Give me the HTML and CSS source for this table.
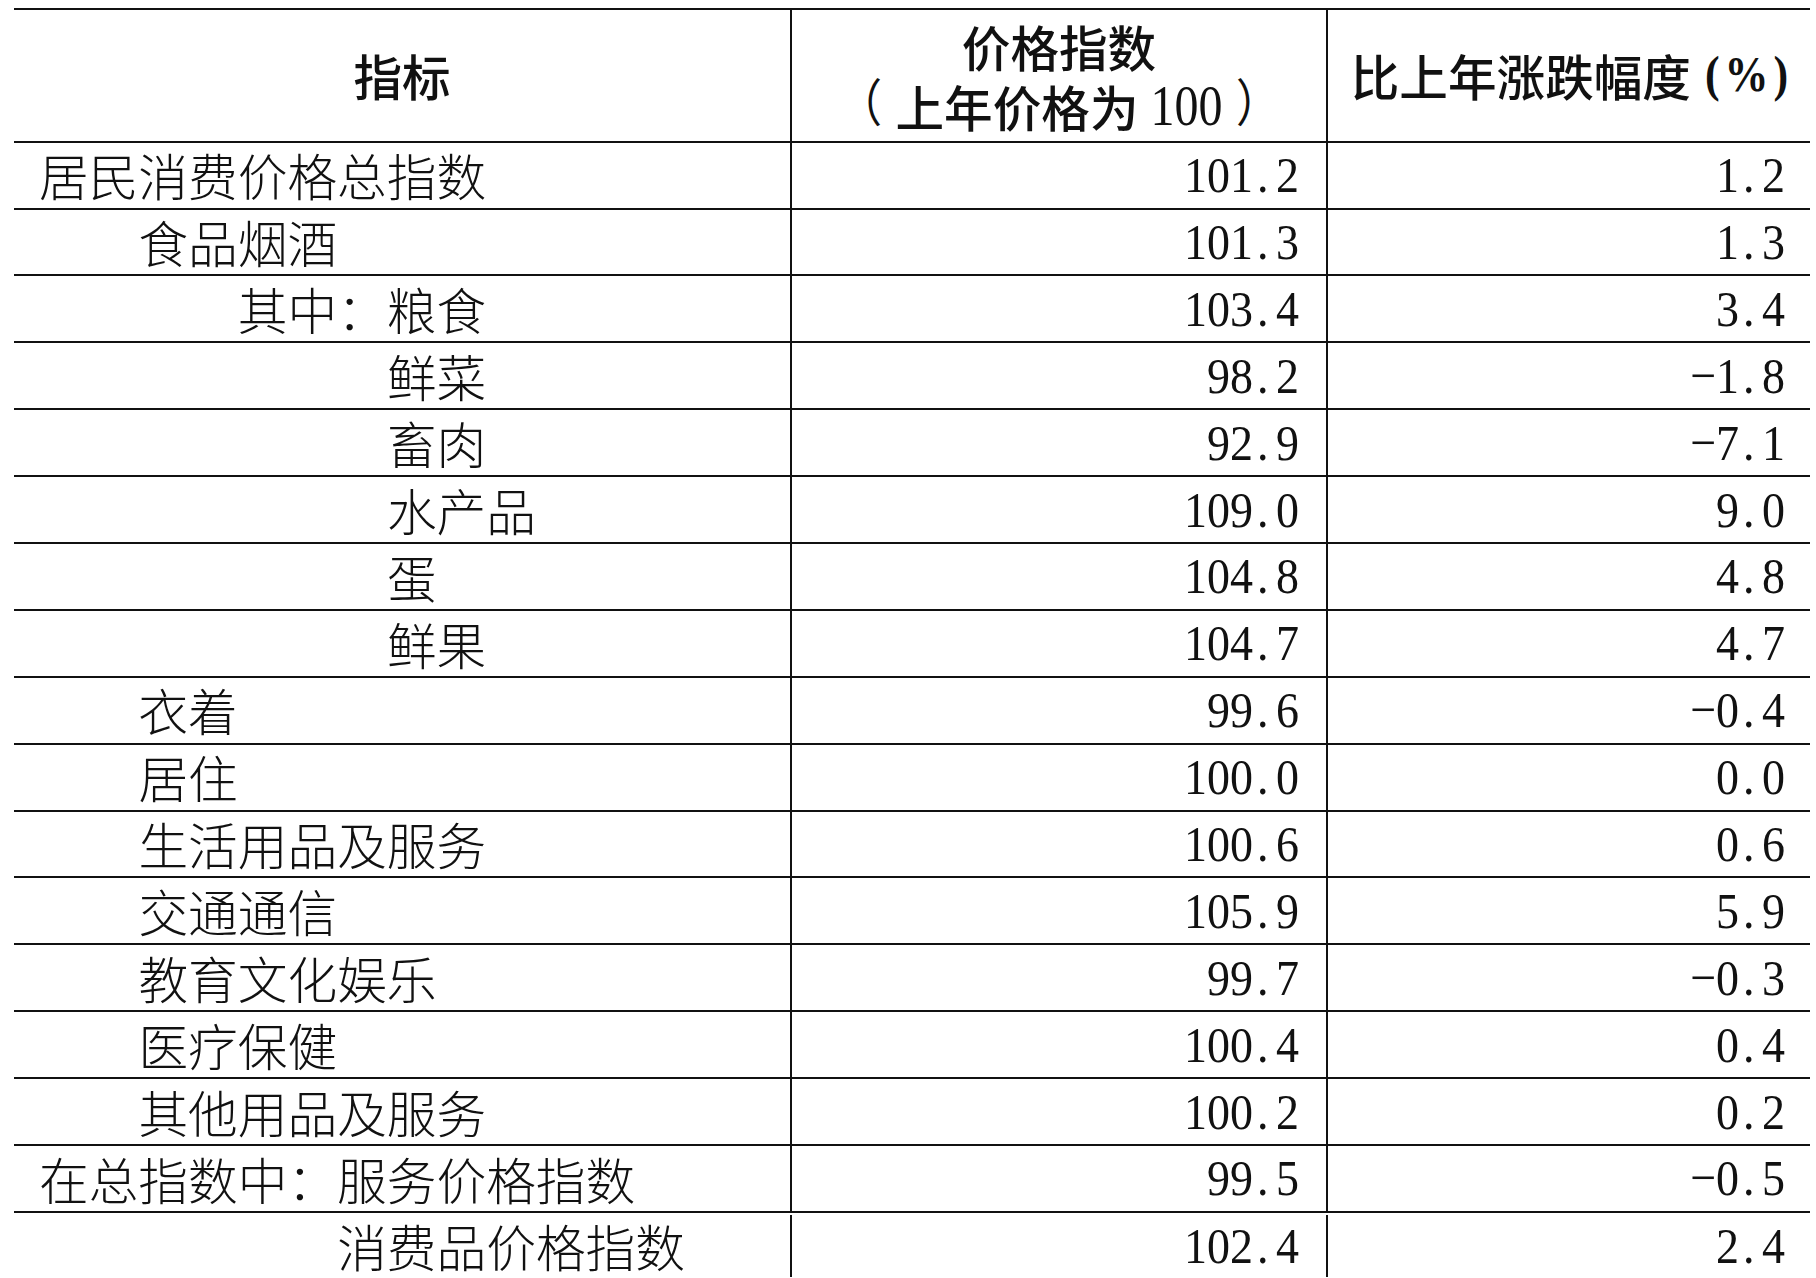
FILE: index.html
```html
<!DOCTYPE html>
<html lang="zh-CN">
<head>
<meta charset="utf-8">
<title>居民消费价格指数</title>
<link rel="stylesheet" href="styles.css">
</head>
<body>
<div class="sheet">
  <div class="row head">
    <div class="cell c1">指标</div>
    <div class="cell c2"><div class="hl1">价格指数</div><div class="hl2"><span class="pl">（</span>上年价格为<span class="hnum">100</span><span class="pr">）</span></div></div>
    <div class="cell c3">比上年涨跌幅度<span class="pct">(%)</span></div>
  </div>
  <div class="row"><div class="cell name l0">居民消费价格总指数</div><div class="cell val v1"><span class="n">101<span class="dot">.</span>2</span></div><div class="cell val v2"><span class="n">1<span class="dot">.</span>2</span></div></div>
  <div class="row"><div class="cell name l1">食品烟酒</div><div class="cell val v1"><span class="n">101<span class="dot">.</span>3</span></div><div class="cell val v2"><span class="n">1<span class="dot">.</span>3</span></div></div>
  <div class="row"><div class="cell name l2">其中：粮食</div><div class="cell val v1"><span class="n">103<span class="dot">.</span>4</span></div><div class="cell val v2"><span class="n">3<span class="dot">.</span>4</span></div></div>
  <div class="row"><div class="cell name l3">鲜菜</div><div class="cell val v1"><span class="n">98<span class="dot">.</span>2</span></div><div class="cell val v2"><span class="n">−1<span class="dot">.</span>8</span></div></div>
  <div class="row"><div class="cell name l3">畜肉</div><div class="cell val v1"><span class="n">92<span class="dot">.</span>9</span></div><div class="cell val v2"><span class="n">−7<span class="dot">.</span>1</span></div></div>
  <div class="row"><div class="cell name l3">水产品</div><div class="cell val v1"><span class="n">109<span class="dot">.</span>0</span></div><div class="cell val v2"><span class="n">9<span class="dot">.</span>0</span></div></div>
  <div class="row"><div class="cell name l3">蛋</div><div class="cell val v1"><span class="n">104<span class="dot">.</span>8</span></div><div class="cell val v2"><span class="n">4<span class="dot">.</span>8</span></div></div>
  <div class="row"><div class="cell name l3">鲜果</div><div class="cell val v1"><span class="n">104<span class="dot">.</span>7</span></div><div class="cell val v2"><span class="n">4<span class="dot">.</span>7</span></div></div>
  <div class="row"><div class="cell name l1">衣着</div><div class="cell val v1"><span class="n">99<span class="dot">.</span>6</span></div><div class="cell val v2"><span class="n">−0<span class="dot">.</span>4</span></div></div>
  <div class="row"><div class="cell name l1">居住</div><div class="cell val v1"><span class="n">100<span class="dot">.</span>0</span></div><div class="cell val v2"><span class="n">0<span class="dot">.</span>0</span></div></div>
  <div class="row"><div class="cell name l1">生活用品及服务</div><div class="cell val v1"><span class="n">100<span class="dot">.</span>6</span></div><div class="cell val v2"><span class="n">0<span class="dot">.</span>6</span></div></div>
  <div class="row"><div class="cell name l1">交通通信</div><div class="cell val v1"><span class="n">105<span class="dot">.</span>9</span></div><div class="cell val v2"><span class="n">5<span class="dot">.</span>9</span></div></div>
  <div class="row"><div class="cell name l1">教育文化娱乐</div><div class="cell val v1"><span class="n">99<span class="dot">.</span>7</span></div><div class="cell val v2"><span class="n">−0<span class="dot">.</span>3</span></div></div>
  <div class="row"><div class="cell name l1">医疗保健</div><div class="cell val v1"><span class="n">100<span class="dot">.</span>4</span></div><div class="cell val v2"><span class="n">0<span class="dot">.</span>4</span></div></div>
  <div class="row"><div class="cell name l1">其他用品及服务</div><div class="cell val v1"><span class="n">100<span class="dot">.</span>2</span></div><div class="cell val v2"><span class="n">0<span class="dot">.</span>2</span></div></div>
  <div class="row"><div class="cell name l0">在总指数中：服务价格指数</div><div class="cell val v1"><span class="n">99<span class="dot">.</span>5</span></div><div class="cell val v2"><span class="n">−0<span class="dot">.</span>5</span></div></div>
  <div class="row last"><div class="cell name l6">消费品价格指数</div><div class="cell val v1"><span class="n">102<span class="dot">.</span>4</span></div><div class="cell val v2"><span class="n">2<span class="dot">.</span>4</span></div></div>
</div>
</body>
</html>
```

FILE: styles.css
```css
html, body {
  margin: 0;
  padding: 0;
  background: #ffffff;
}

body {
  overflow: hidden;
  height: 1278px;
}

.sheet {
  margin: 8px 0 0 14px;
  width: 1796px;
  border-top: 2px solid #111;
  color: #111;
  font-family: "Noto Sans CJK SC", "Noto Sans", sans-serif;
}

.row {
  display: grid;
  grid-template-columns: 778px 536px 482px;
  height: 66.9px;
  box-sizing: border-box;
  border-bottom: 2px solid #111;
}

.row.last {
  border-bottom: none;
  height: 64px;
  padding-top: 2px;
}

.row.head {
  height: 132.7px;
}

.cell {
  display: flex;
  align-items: center;
  box-sizing: border-box;
  min-width: 0;
}

.row > .cell:nth-child(1),
.row > .cell:nth-child(2) {
  border-right: 2px solid #111;
}

/* header */
.head .cell {
  justify-content: center;
  text-align: center;
  font-size: 48.6px;
  font-weight: 500;
  white-space: nowrap;
}

.head .c1,
.head .c3 {
  line-height: 1;
}

.head .c2 {
  flex-direction: column;
  padding-top: 2px;
}

.hl1,
.hl2 {
  height: 60px;
  line-height: 1;
  display: flex;
  align-items: center;
  justify-content: center;
}

.pl,
.pr {
  font-family: "Liberation Serif", serif;
  font-size: 44px;
  font-weight: 400;
  line-height: 1;
  display: inline-block;
  transform: scaleY(1.15);
}

.pl { margin-right: 14px; }
.pr { margin-left: 14px; }

.hnum {
  display: inline-block;
  margin-left: 12px;
  font-family: "Liberation Serif", serif;
  font-size: 48px;
  font-weight: 400;
  line-height: 1;
  transform: scaleY(1.17);
}

.head .c3 {
  padding-left: 6px;
}

.pct {
  font-family: "Liberation Serif", serif;
  font-size: 44px;
  font-weight: 700;
  line-height: 1;
  letter-spacing: 5px;
  margin-left: 14px;
  display: inline-block;
  transform: scaleY(1.15);
}

/* indicator names */
.name {
  font-size: 49.7px;
  font-weight: 300;
  line-height: 1;
  white-space: nowrap;
  padding-left: 25px;
}

.l1 { padding-left: calc(25px + 2em); }
.l2 { padding-left: calc(25px + 4em); }
.l3 { padding-left: calc(25px + 7em); }
.l6 { padding-left: calc(25px + 6em); }

/* values */
.val {
  justify-content: flex-end;
  font-family: "Liberation Serif", serif;
  font-size: 46px;
  line-height: 1;
  white-space: nowrap;
}

.v1 { padding-right: 27px; }
.v2 { padding-right: 25px; }

.n {
  display: inline-block;
  transform: scaleY(1.12);
}

.dot {
  display: inline-block;
  width: 23px;
  text-align: left;
  padding-left: 4px;
  box-sizing: border-box;
}
```
